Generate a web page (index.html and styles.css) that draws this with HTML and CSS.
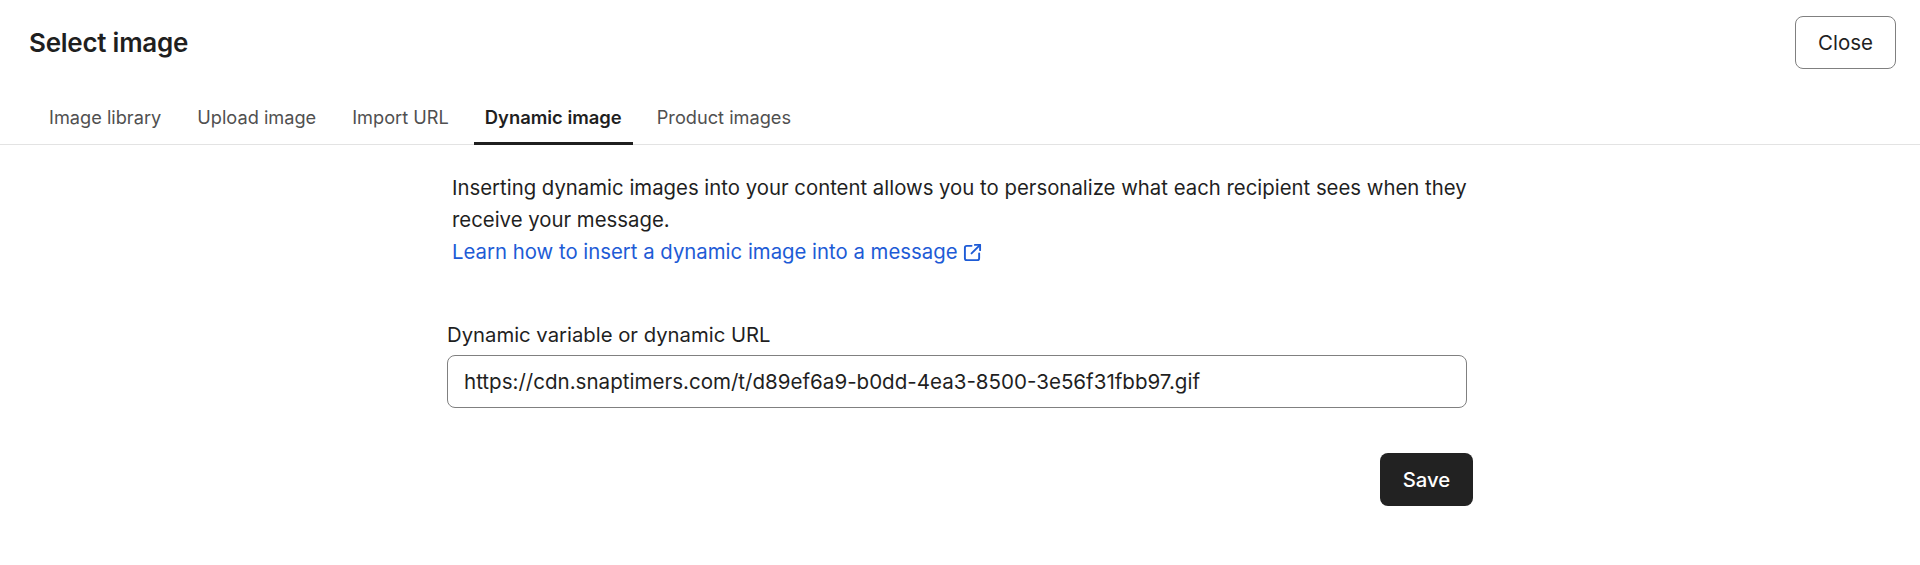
FILE: index.html
```html
<!DOCTYPE html>
<html lang="en">
<head>
   <meta charset="UTF-8">
   <meta name="viewport" content="width=device-width, initial-scale=1.0">
   <title>Select image</title>
   <link rel="stylesheet" href="styles.css">
</head>
<body>
   <header class="top">
      <h1>Select image</h1>
      <button class="close">Close</button>
   </header>
   <nav class="tabs">
      <a class="tab">Image library</a>
      <a class="tab">Upload image</a>
      <a class="tab">Import URL</a>
      <a class="tab active">Dynamic image</a>
      <a class="tab">Product images</a>
   </nav>
   <main class="content">
      <p class="intro">
         Inserting dynamic images into your content allows you to personalize what each recipient sees when they receive your message.<br>
         <a class="learn">Learn how to insert a dynamic image into a message
            <svg class="ext" viewBox="0 0 20 20" width="19" height="19" fill="none" stroke="currentColor" stroke-width="2" stroke-linecap="round" stroke-linejoin="round">
               <path d="M9 3H4a2 2 0 0 0-2 2v11a2 2 0 0 0 2 2h11a2 2 0 0 0 2-2v-5"/>
               <path d="M12.5 2H18v5.5"/>
               <path d="M18 2l-9 9"/>
            </svg>
         </a>
      </p>
      <label class="label" for="url">Dynamic variable or dynamic URL</label>
      <input class="field" id="url" type="text" value="https://cdn.snaptimers.com/t/d89ef6a9-b0dd-4ea3-8500-3e56f31fbb97.gif">
      <div class="actions">
         <button class="save">Save</button>
      </div>
   </main>
</body>
</html>
```

FILE: styles.css
```css
*{
   margin: 0;
   padding: 0;
   box-sizing: border-box;
}

body{
   font-family: Inter, "Liberation Sans", sans-serif;
   color: #1f1f1f;
   background: #fff;
}

.top{
   display: flex;
   justify-content: space-between;
   align-items: center;
   padding: 16px 24px 0 29px;
}

h1{
   font-size: 26px;
   font-weight: 600;
   letter-spacing: -0.25px;
}

button{
   font-family: inherit;
}

.close{
   width: 101px;
   height: 53px;
   background: #fff;
   border: 1px solid #808080;
   border-radius: 8px;
   font-size: 20.5px;
   color: #1f1f1f;
}

.tabs{
   display: flex;
   gap: 14px;
   height: 76px;
   padding-left: 38px;
   border-bottom: 1px solid #e3e3e3;
}

.tab{
   display: flex;
   align-items: center;
   height: 76px;
   padding: 20px 11px 0;
   font-size: 18.2px;
   color: #505050;
}

.tab.active{
   margin-right: -1px;
   font-size: 18.4px;
   font-weight: 600;
   color: #1f1f1f;
   box-shadow: inset 0 -3px 0 #1f1f1f;
}

.content{
   width: 1026px;
   margin-left: 447px;
   padding-top: 27px;
}

.intro{
   padding-left: 5px;
   width: 1030px;
   font-size: 20.35px;
   line-height: 32px;
}

.learn{
   color: #1d5bd6;
}

.ext{
   vertical-align: -3px;
}

.label{
   display: block;
   margin-top: 53px;
   font-size: 20.3px;
   line-height: 28px;
}

.field{
   display: block;
   width: 1020px;
   height: 53px;
   margin-top: 6px;
   padding: 0 16px;
   border: 1px solid #808080;
   border-radius: 8px;
   font-family: inherit;
   font-size: 20.55px;
   color: #1f1f1f;
}

.actions{
   display: flex;
   justify-content: flex-end;
   margin-top: 45px;
}

.save{
   width: 93px;
   height: 53px;
   background: #222;
   border: 0;
   border-radius: 8px;
   font-size: 20.3px;
   font-weight: 500;
   color: #fff;
}
```
